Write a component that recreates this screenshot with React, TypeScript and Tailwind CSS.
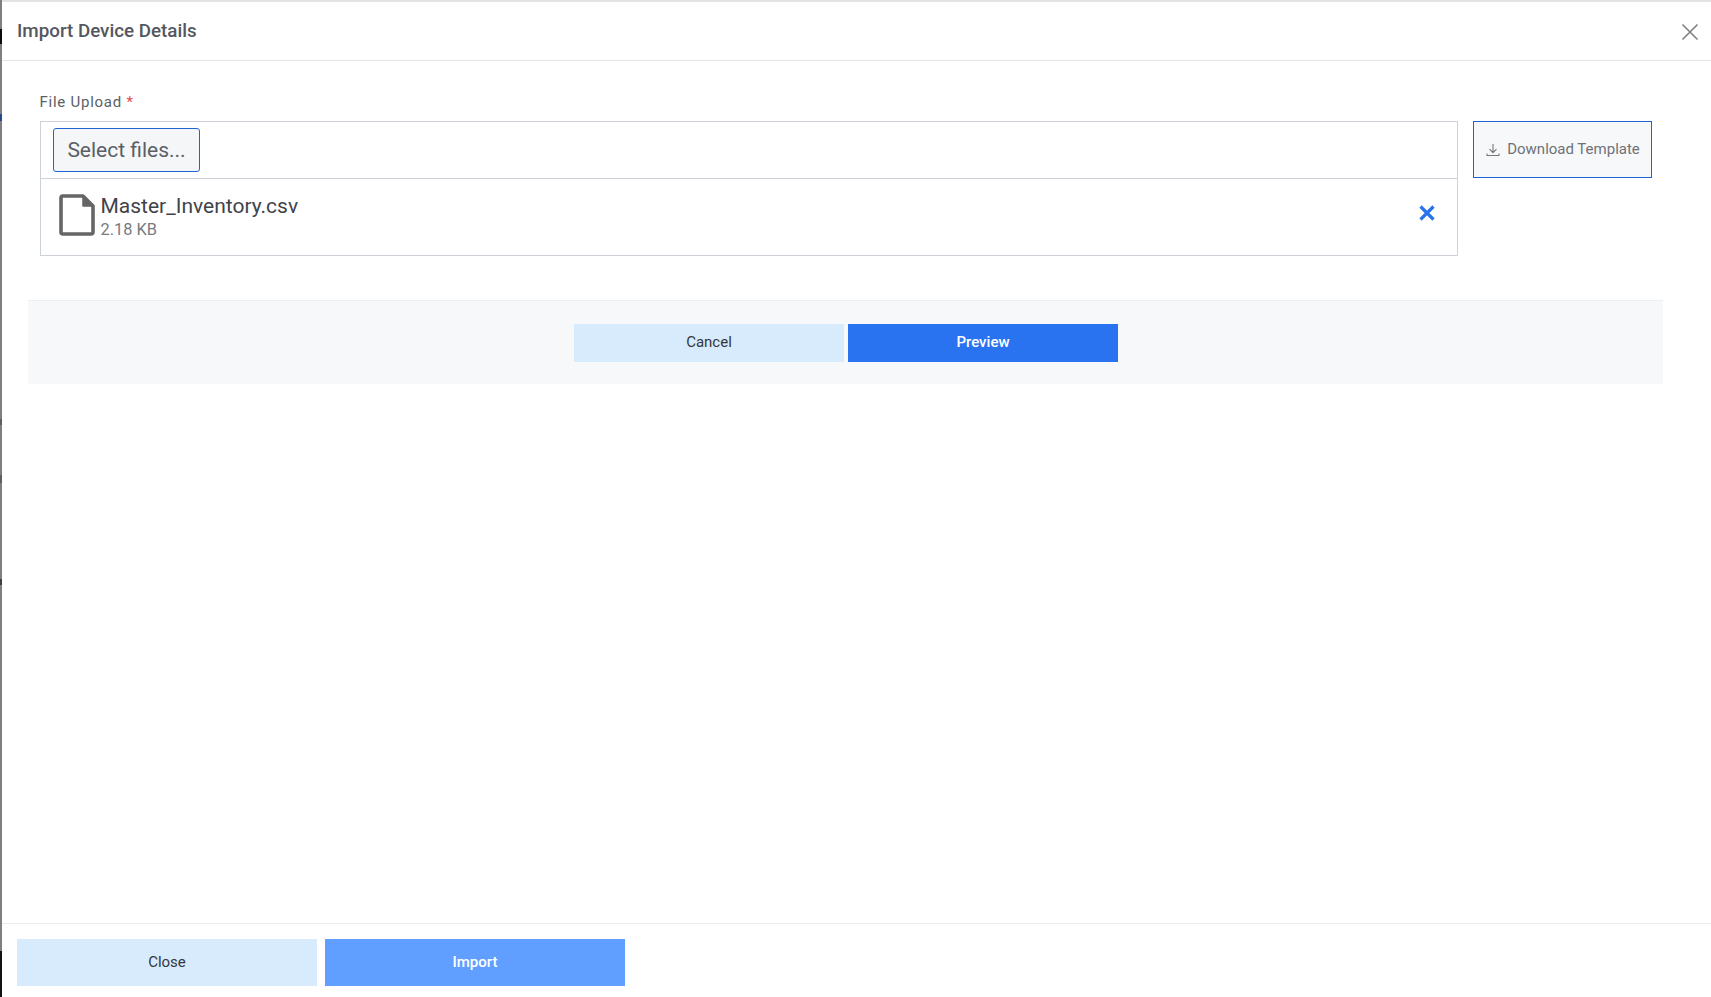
export default function App() {
  return (
    <div className="flex h-[997px] w-[1711px] overflow-hidden bg-white font-['Roboto',sans-serif]">
      <div className="flex w-[2px] shrink-0 flex-col bg-[#7f7f7f]">
        <div className="h-[29px] shrink-0" />
        <div className="h-[15px] shrink-0 bg-[#0c0c0c]" />
        <div className="h-[70px] shrink-0" />
        <div className="h-[7px] shrink-0 bg-[#274a8c]" />
        <div className="h-[298px] shrink-0" />
        <div className="h-[6px] shrink-0 bg-[#5f5f5f]" />
        <div className="h-[50px] shrink-0" />
        <div className="h-[8px] shrink-0 bg-[#5f5f5f]" />
        <div className="h-[96px] shrink-0" />
        <div className="h-[6px] shrink-0 bg-[#3f3f3f]" />
        <div className="h-[366px] shrink-0" />
        <div className="flex-1 bg-[#121212]" />
      </div>
      <div className="flex min-w-0 flex-1 flex-col border-t-2 border-[#e3e3e3]">
        <div className="flex h-[59px] shrink-0 items-center justify-between border-b border-[#e6e6e6] pl-[15px] pr-[13px]">
          <h1 className="text-[18.8px] font-medium leading-[26px] text-[#54585e]">Import Device Details</h1>
          <svg width="18" height="18" viewBox="0 0 18 18" fill="none" stroke="#808080" strokeWidth="1.6" className="mt-[1px] mr-[-1px]">
            <path d="M1.5 1.5 16.5 16.5M16.5 1.5 1.5 16.5" />
          </svg>
        </div>
        <div className="flex flex-1 flex-col pl-[26px] pr-[48px] pt-[31px]">
          <div className="flex flex-col px-[12px]">
            <label className="ml-[-0.5px] text-[15px] leading-[20px] tracking-[0.75px] text-[#5a5f66]">
              File Upload <span className="text-[#e5484d]">*</span>
            </label>
            <div className="mt-[9px] flex items-start gap-[15px]">
              <div className="flex h-[135px] w-[1418px] shrink-0 flex-col border border-[#cdd2d8]">
                <div className="flex h-[57px] shrink-0 items-start border-b border-[#cdd2d8] pl-[12px] pt-[6px]">
                  <button className="flex h-[44px] w-[147px] items-center justify-center rounded-[3px] border border-[#1f63d6] bg-[#f5f6f8] pt-[1px] text-[21px] text-[#5a5f66]">
                    Select files...
                  </button>
                </div>
                <div className="flex flex-1 items-center pl-[18px] pr-[21px]">
                  <svg width="36" height="42" viewBox="0 0 36 42" className="mb-[5px] mr-[5px] shrink-0">
                    <path d="M3.5 2H24L34 12V38a2 2 0 0 1-2 2H4A2 2 0 0 1 2 38V4A2 2 0 0 1 3.5 2Z" fill="#fff" stroke="#666" strokeWidth="3.6" strokeLinejoin="round" />
                    <path d="M24 2 34 12H24Z" fill="#666" stroke="#666" strokeWidth="1.5" strokeLinejoin="round" />
                  </svg>
                  <div className="mt-[-2px] flex min-w-0 flex-1 flex-col pl-[0.5px]">
                    <span className="pt-[1px] text-[21px] leading-[26px] text-[#3f4349]">Master_Inventory.csv</span>
                    <span className="text-[16.4px] leading-[21px] text-[#777b81]">2.18 KB</span>
                  </div>
                  <svg width="18" height="18" viewBox="0 0 18 18" fill="none" stroke="#2a73ee" strokeWidth="3.2" className="mb-[9px] shrink-0">
                    <path d="M2.5 2.5 15.5 15.5M15.5 2.5 2.5 15.5" />
                  </svg>
                </div>
              </div>
              <button className="flex h-[57px] w-[179px] shrink-0 items-center justify-center gap-[7px] border border-[#1f63d6] bg-[#f7f8fa] pl-[1px] text-[15px] text-[#6e7278]">
                <svg width="14" height="14" viewBox="0 0 14 14" fill="none" stroke="#777" strokeWidth="1.1" className="shrink-0">
                  <path d="M7 1V9.5M3.5 6.2 7 9.7 10.5 6.2M1 10.5V12.5H13V10.5" />
                </svg>
                Download Template
              </button>
            </div>
          </div>
          <div className="mt-[44px] flex h-[84px] shrink-0 items-center justify-center gap-[4px] border-t border-[#eceef0] bg-[#f7f8fa] pl-[1px]">
            <button className="h-[38px] w-[270px] bg-[#d7ebfc] text-[15px] text-[#33373d]">Cancel</button>
            <button className="h-[38px] w-[270px] bg-[#2a73f0] text-[15px] font-medium text-white">Preview</button>
          </div>
        </div>
        <div className="flex h-[74px] shrink-0 items-start gap-[8px] border-t border-[#ececec] pl-[15px] pt-[15px]">
          <button className="h-[47px] w-[300px] bg-[#d7ebfc] text-[15px] text-[#33373d]">Close</button>
          <button className="h-[47px] w-[300px] bg-[#609fff] text-[15px] font-medium text-white">Import</button>
        </div>
      </div>
    </div>
  );
}
